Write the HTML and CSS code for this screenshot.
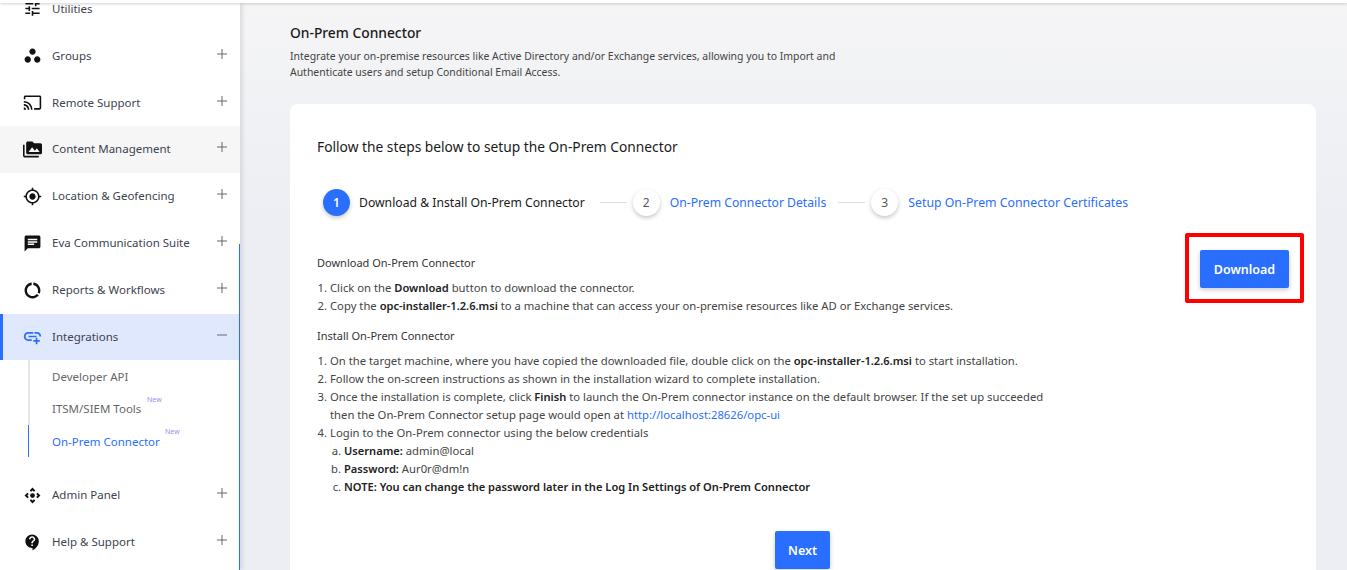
FILE: index.html
```html
<!DOCTYPE html>
<html lang="en">
<head>
<meta charset="utf-8">
<title>On-Prem Connector</title>
<link rel="stylesheet" href="styles.css">
</head>
<body>
<div class="topbar"></div>
<div class="shell">
  <aside class="sidebar">
    <span class="scroll-thumb"></span>
    <nav class="nav">
      <a class="row"><svg class="ico" viewBox="0 0 24 24"><path d="M3 17v2h6v-2H3zM3 5v2h10V5H3zm10 16v-2h8v-2h-8v-2h-2v6h2zM7 9v2H3v2h4v2h2V9H7zm14 4v-2H11v2h10zm-6-4h2V7h4V5h-4V3h-2v6z"/></svg><span class="label">Utilities</span></a>
      <a class="row"><svg class="ico" viewBox="0 0 24 24"><path d="M6 13c-2.2 0-4 1.8-4 4s1.8 4 4 4 4-1.8 4-4-1.8-4-4-4zm12 0c-2.2 0-4 1.8-4 4s1.8 4 4 4 4-1.8 4-4-1.8-4-4-4zm-6-10C9.8 3 8 4.8 8 7s1.8 4 4 4 4-1.8 4-4-1.8-4-4-4z"/></svg><span class="label">Groups</span><svg class="tog" viewBox="0 0 10 10"><path d="M0 5h10M5 0v10"/></svg></a>
      <a class="row"><svg class="ico" viewBox="0 0 24 24"><path d="M21 3H3c-1.1 0-2 .9-2 2v3h2V5h18v14h-7v2h7c1.1 0 2-.9 2-2V5c0-1.1-.9-2-2-2zM1 18v3h3c0-1.66-1.34-3-3-3zm0-4v2c2.76 0 5 2.24 5 5h2c0-3.87-3.13-7-7-7zm0-4v2c4.97 0 9 4.03 9 9h2c0-6.08-4.93-11-11-11z"/></svg><span class="label">Remote Support</span><svg class="tog" viewBox="0 0 10 10"><path d="M0 5h10M5 0v10"/></svg></a>
      <a class="row hover"><svg class="ico" viewBox="0 0 24 24"><path d="M2 6H0v5h.01L0 20c0 1.1.9 2 2 2h18v-2H2V6zm20-2h-8l-2-2H6c-1.1 0-1.99.9-1.99 2L4 16c0 1.1.9 2 2 2h16c1.1 0 2-.9 2-2V6c0-1.1-.9-2-2-2zM7 15l4.5-6 3.5 4.51 2.5-3.01L21 15H7z"/></svg><span class="label">Content Management</span><svg class="tog" viewBox="0 0 10 10"><path d="M0 5h10M5 0v10"/></svg></a>
      <a class="row"><svg class="ico" viewBox="0 0 24 24"><path d="M12 8c-2.21 0-4 1.79-4 4s1.79 4 4 4 4-1.79 4-4-1.79-4-4-4zm8.94 3c-.46-4.17-3.77-7.48-7.94-7.94V1h-2v2.06C6.83 3.52 3.52 6.83 3.06 11H1v2h2.06c.46 4.17 3.77 7.48 7.94 7.94V23h2v-2.06c4.17-.46 7.48-3.77 7.94-7.94H23v-2h-2.06zM12 19c-3.87 0-7-3.13-7-7s3.13-7 7-7 7 3.13 7 7-3.13 7-7 7z"/></svg><span class="label">Location &amp; Geofencing</span><svg class="tog" viewBox="0 0 10 10"><path d="M0 5h10M5 0v10"/></svg></a>
      <a class="row"><svg class="ico" viewBox="0 0 24 24"><path d="M20 2H4c-1.1 0-1.99.9-1.99 2L2 22l4-4h14c1.1 0 2-.9 2-2V4c0-1.1-.9-2-2-2zM6 9h12v2H6V9zm8 5H6v-2h8v2zm4-6H6V6h12v2z"/></svg><span class="label">Eva Communication Suite</span><svg class="tog" viewBox="0 0 10 10"><path d="M0 5h10M5 0v10"/></svg></a>
      <a class="row"><svg class="ico" viewBox="0 0 24 24"><path d="M13 2.05v3.03c3.39.49 6 3.39 6 6.92 0 .9-.18 1.75-.48 2.54l2.6 1.53c.56-1.24.88-2.62.88-4.07 0-5.18-3.95-9.45-9-9.95zM12 19c-3.87 0-7-3.13-7-7 0-3.53 2.61-6.43 6-6.92V2.05c-5.06.5-9 4.76-9 9.95 0 5.52 4.47 10 9.99 10 3.31 0 6.24-1.61 8.06-4.09l-2.6-1.53C16.17 17.98 14.21 19 12 19z"/></svg><span class="label">Reports &amp; Workflows</span><svg class="tog" viewBox="0 0 10 10"><path d="M0 5h10M5 0v10"/></svg></a>
      <a class="row active"><svg class="ico" viewBox="0 0 24 24"><path d="M3.2 12c0-1.9 1.5-3.4 3.4-3.4H13V6.4H6.6C3.5 6.4 1 8.9 1 12s2.5 5.6 5.6 5.6H11v-2.2H6.6c-1.9 0-3.4-1.5-3.4-3.4zM7 10.9v2.2h10v-2.2H7zM17.400 6.400H14.500v2.200h2.900c1.900 0 3.400 1.500 3.400 3.400H23c0-3.100-2.500-5.600-5.600-5.600zM18.200 13.500h-2.200v3h-3v2.200h3v3h2.200v-3h3v-2.200h-3z"/></svg><span class="label">Integrations</span><svg class="tog" viewBox="0 0 10 10"><path d="M0 5h10"/></svg></a>
      <ul class="sub">
        <li class="sub-item"><a>Developer API</a></li>
        <li class="sub-item"><a>ITSM/SIEM Tools</a><sup class="new">New</sup></li>
        <li class="sub-item current"><a>On-Prem Connector</a><sup class="new">New</sup></li>
      </ul>
      <a class="row"><svg class="ico" viewBox="0 0 24 24"><path d="M15.54 5.54L13.77 7.3 12 5.54 10.23 7.3 8.46 5.54 12 2zm2.92 10l-1.76-1.77L18.46 12l-1.76-1.77 1.76-1.77L22 12zm-10 2.92l1.77-1.76L12 18.46l1.77-1.76 1.77 1.76L12 22zm-2.92-10l1.76 1.77L5.54 12l1.76 1.77-1.76 1.77L2 12z"/><circle cx="12" cy="12" r="3"/></svg><span class="label">Admin Panel</span><svg class="tog" viewBox="0 0 10 10"><path d="M0 5h10M5 0v10"/></svg></a>
      <a class="row"><svg class="ico" viewBox="0 0 24 24"><path d="M11.5 2C6.81 2 3 5.81 3 10.5S6.81 19 11.5 19h.5v3c4.86-2.34 8-7 8-11.5C20 5.81 16.19 2 11.5 2zm1 14.5h-2v-2h2v2zm0-3.5h-2c0-3.25 3-3 3-5 0-1.1-.9-2-2-2s-2 .9-2 2h-2c0-2.21 1.79-4 4-4s4 1.79 4 4c0 2.5-3 2.75-3 5z"/></svg><span class="label">Help &amp; Support</span><svg class="tog" viewBox="0 0 10 10"><path d="M0 5h10M5 0v10"/></svg></a>
    </nav>
  </aside>
  <main class="main">
    <h1 class="page-title">On-Prem Connector</h1>
    <p class="page-desc">Integrate your on-premise resources like Active Directory and/or Exchange services, allowing you to Import and<br>Authenticate users and setup Conditional Email Access.</p>
    <section class="card">
      <h2 class="card-title">Follow the steps below to setup the On-Prem Connector</h2>
      <ol class="stepper">
        <li class="step done"><span class="dot">1</span><span class="step-text">Download &amp; Install On-Prem Connector</span></li>
        <li class="line"></li>
        <li class="step"><span class="dot">2</span><span class="step-text">On-Prem Connector Details</span></li>
        <li class="line"></li>
        <li class="step last"><span class="dot">3</span><span class="step-text">Setup On-Prem Connector Certificates</span></li>
      </ol>
      <div class="body">
        <div class="instructions">
          <h3 class="sec">Download On-Prem Connector</h3>
          <ol class="list">
            <li>Click on the <b>Download</b> button to download the connector.</li>
            <li>Copy the <b>opc-installer-1.2.6.msi</b> to a machine that can access your on-premise resources like AD or Exchange services.</li>
          </ol>
          <h3 class="sec">Install On-Prem Connector</h3>
          <ol class="list">
            <li>On the target machine, where you have copied the downloaded file, double click on the <b>opc-installer-1.2.6.msi</b> to start installation.</li>
            <li>Follow the on-screen instructions as shown in the installation wizard to complete installation.</li>
            <li>Once the installation is complete, click <b>Finish</b> to launch the On-Prem connector instance on the default browser. If the set up succeeded<br>then the On-Prem Connector setup page would open at <a class="link">http://localhost:28626/opc-ui</a></li>
            <li>Login to the On-Prem connector using the below credentials
              <ol class="alpha">
                <li><b>Username:</b> admin@local</li>
                <li><b>Password:</b> Aur0r@dm!n</li>
                <li><b>NOTE: You can change the password later in the Log In Settings of On-Prem Connector</b></li>
              </ol>
            </li>
          </ol>
        </div>
        <div class="dl-wrap">
          <button class="btn dl">Download</button>
          <span class="redbox"></span>
        </div>
      </div>
      <div class="actions"><button class="btn next">Next</button></div>
    </section>
  </main>
</div>
</body>
</html>
```
FILE: styles.css
```css
* { box-sizing: border-box; }
html, body { margin: 0; padding: 0; height: 570px; overflow: hidden; }
body { font-family: "Noto Sans", "Open Sans", sans-serif; font-size: 12px; color: #333; background: #eff0f3; }

.topbar { position: relative; z-index: 5; height: 3px; background: #fff; box-shadow: 0 1px 3px rgba(0,0,0,.18); }
.shell { display: flex; height: 567px; }

.sidebar { position: relative; z-index: 2; flex: 0 0 240px; background: #fff; overflow: hidden; box-shadow: 2px 0 5px rgba(0,0,0,.12); }
.scroll-thumb { position: absolute; z-index: 3; right: 0; top: 241px; bottom: 0; width: 1px; background: #2a6eff; }
.nav { display: block; margin-top: -17.7px; }
.row { display: flex; align-items: center; height: 46.9px; padding-left: 23px; color: #3c4350; position: relative; }
.row.hover { background: #f6f6f6; }
.row.active { background: #dfe8fc; border-left: 3px solid #2a6eff; padding-left: 20px; }
.ico { width: 19px; height: 19px; flex: none; fill: #111; margin-right: 10px; }
.row.active .ico { fill: #2a6eff; }
.label { flex: 1; font-size: 11.5px; line-height: 16px; }
.tog { width: 10px; height: 10px; flex: none; margin: -4px 13px 0 0; fill: none; stroke: #666; stroke-width: 1; }

.sub { list-style: none; margin: 0 0 14.7px; padding: 0 0 0 28px; }
.sub-item { height: 32.3px; display: flex; align-items: center; padding-left: 22px; border-left: 2px solid #e6e6e6; color: #666; position: relative; }
.sub-item a { font-size: 11.5px; }
.sub-item.current { border-left: 1px solid #2a6eff; padding-left: 23px; color: #2a6eff; }
.new { position: absolute; font-size: 7px; line-height: 8px; color: #9d90ee; top: 3px; }
.sub-item .new { left: 117px; }
.sub-item.current .new { left: 136px; }

.main { flex: 1; min-width: 0; padding: 0 31px 0 50px; background: linear-gradient(#f5f5f6, #eceef3 220px); }
.page-title { margin: 21px 0 0; font-size: 13.8px; line-height: 18px; font-weight: 500; color: #1a1a1a; }
.page-desc { margin: 6px 0 0; font-size: 10.45px; line-height: 16px; color: #444; }
.card { margin-top: 24px; background: #fff; border-radius: 8px; padding: 33px 27px 0; height: 480px; }
.card-title { margin: 0; font-size: 13.77px; line-height: 20px; font-weight: 400; color: #1a1a1a; }

.stepper { list-style: none; display: flex; align-items: center; margin: 32px 0 0; padding: 0 0 0 6px; }
.step { display: flex; align-items: center; gap: 10px; color: #2a6eff; font-size: 12.2px; }
.step.last { font-size: 12.3px; margin-left: 1px; }
.dot { width: 27px; height: 27px; border-radius: 50%; display: flex; align-items: center; justify-content: center; background: #fff; color: #555; font-size: 12px; box-shadow: 0 2px 4px rgba(0,0,0,.22); }
.done { color: #1a1a1a; gap: 9px; }
.done .dot { background: #2a6eff; color: #fff; font-weight: 600; }
.line { width: 27px; height: 1px; background: #ddd; margin: 0 6px 0 15px; }
.line + .step + .line { margin-left: 12px; margin-right: 5px; }

.body { display: flex; justify-content: space-between; align-items: flex-start; margin-top: 38px; }
.instructions { flex: 1; min-width: 0; }
.sec { margin: 0; font-size: 11px; line-height: 18px; font-weight: 400; color: #333; }
.list { margin: 7px 0 12px; padding: 0 0 0 13px; font-size: 11.27px; line-height: 18px; color: #444; }
.list b { font-weight: 600; font-size: 11.1px; color: #222; }
.alpha { list-style: lower-alpha; margin: 0; padding: 0 0 0 14px; }
.link { color: #2a6eff; }

.dl-wrap { position: relative; margin: -4px 0 0; flex: none; }
.btn { border: 0; border-radius: 2px; background: #2a6eff; color: #fff; font-family: inherit; font-size: 12.5px; font-weight: 600; height: 38px; box-shadow: 0 2px 5px rgba(0,0,0,.2); }
.dl { width: 89px; display: block; }
.redbox { position: absolute; left: -15px; top: -17px; width: 119px; height: 70px; border: 4px solid #f00; border-radius: 2px; }
.actions { display: flex; justify-content: center; margin-top: 23px; padding-right: 1px; }
.next { width: 55px; }
```
